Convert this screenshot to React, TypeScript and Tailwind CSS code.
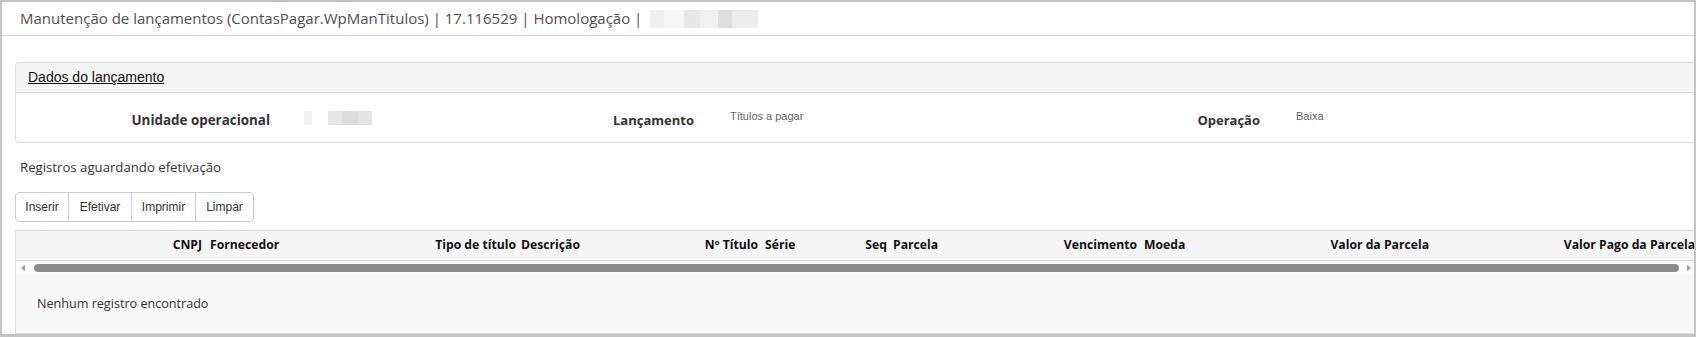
import React from "react";

const hdr: { t: string; w: number; right: boolean; pl?: number }[] = [
  { t: "CNPJ", w: 186, right: true },
  { t: "Fornecedor", w: 199, right: false, pl: 8 },
  { t: "Tipo de título", w: 115, right: true },
  { t: "Descrição", w: 125, right: false, pl: 5 },
  { t: "Nº Título", w: 117, right: true },
  { t: "Série", w: 63, right: false, pl: 7 },
  { t: "Seq", w: 66, right: true },
  { t: "Parcela", w: 114, right: false, pl: 6 },
  { t: "Vencimento", w: 136, right: true },
  { t: "Moeda", w: 114, right: false, pl: 7 },
  { t: "Valor da Parcela", w: 178, right: true },
  { t: "Valor Pago da Parcela", w: 266, right: true },
];

export default function App() {
  const sans = { fontFamily: '"Open Sans", "Liberation Sans", sans-serif' };
  const arial = { fontFamily: '"Liberation Sans", Arial, sans-serif' };
  return (
    <div className="w-[1696px] h-[337px] overflow-hidden bg-white">
      <div className="w-[1696px] h-[337px] box-border border-t-2 border-l-2 border-r-2 border-b-[3px] border-[#c3c3c3] flex flex-col overflow-hidden">
        {/* title bar */}
        <div
          className="h-[34px] shrink-0 border-b border-[#d9d9d9] flex items-center pl-[18px] text-[15px] text-[#505050]"
          style={sans}
        >
          <span>Manutenção de lançamentos (ContasPagar.WpManTitulos) | 17.116529 | Homologação |</span>
          <span className="ml-[8px] flex h-[18px]">
            <span className="w-[14px] bg-[#efefef]" />
            <span className="w-[20px] bg-[#f6f6f6]" />
            <span className="w-[16px] bg-[#e8e8e8]" />
            <span className="w-[18px] bg-[#f0f0f0]" />
            <span className="w-[14px] bg-[#dedede]" />
            <span className="w-[26px] bg-[#ececec]" />
          </span>
        </div>

        <div className="pl-[13px] pt-[26px] flex flex-col">
          {/* panel */}
          <div className="h-[81px] border border-[#dcdcdc] rounded-[4px] flex flex-col shrink-0 -mr-[4px]">
            <div
              className="h-[30px] bg-[#f5f5f5] border-b border-[#dcdcdc] flex items-center pl-[12px] rounded-t-[4px] text-[14px] text-[#111] underline"
              style={arial}
            >
              Dados do lançamento
            </div>
            <div className="flex-1 flex items-start pt-[17px]">
              <div
                className="w-[254px] text-right text-[13.4px] font-bold text-[#333] leading-[20px]"
                style={sans}
              >
                Unidade operacional
              </div>
              <div className="w-[343px] pl-[34px] pt-[1px] flex">
                <div className="flex h-[14px]">
                  <span className="w-[8px] bg-[#f3f3f3]" />
                  <span className="w-[16px] bg-white" />
                  <span className="w-[14px] bg-[#e6e6e6]" />
                  <span className="w-[16px] bg-[#dcdcdc]" />
                  <span className="w-[14px] bg-[#e4e4e4]" />
                </div>
              </div>
              <div
                className="w-[79px] text-right text-[13px] font-bold text-[#333] leading-[20px] whitespace-nowrap"
                style={sans}
              >
                Lançamento
              </div>
              <div
                className="w-[464px] pl-[38px] text-[11px] text-[#666] leading-[14px] -mt-[1px]"
                style={arial}
              >
                Títulos a pagar
              </div>
              <div
                className="w-[104px] text-right text-[13px] font-bold text-[#333] leading-[20px] whitespace-nowrap"
                style={sans}
              >
                Operação
              </div>
              <div
                className="pl-[36px] text-[11px] text-[#666] leading-[14px] -mt-[1px]"
                style={arial}
              >
                Baixa
              </div>
            </div>
          </div>

          {/* section title */}
          <div
            className="mt-[14px] pl-[5px] h-[20px] leading-[20px] text-[13.2px] text-[#333]"
            style={sans}
          >
            Registros aguardando efetivação
          </div>

          {/* button group */}
          <div
            className="mt-[15px] flex h-[30px] w-fit border border-[#cccccc] rounded-[4px] text-[12px] text-[#333]"
            style={arial}
          >
            <div className="w-[53px] flex items-center justify-center border-r border-[#cccccc]">Inserir</div>
            <div className="w-[63px] flex items-center justify-center border-r border-[#cccccc]">Efetivar</div>
            <div className="w-[64px] flex items-center justify-center border-r border-[#cccccc]">Imprimir</div>
            <div className="w-[57px] flex items-center justify-center">Limpar</div>
          </div>

          {/* grid */}
          <div className="mt-[8px] border border-[#dcdcdc] border-r-0 flex flex-col -mr-[4px]">
            <div
              className="h-[30px] bg-[#f5f5f5] border-b border-[#dcdcdc] flex items-center text-[12.2px] font-bold text-[#111] whitespace-nowrap overflow-hidden"
              style={sans}
            >
              {hdr.map((h) => (
                <div
                  key={h.t}
                  className={h.right ? "shrink-0 text-right" : "shrink-0 text-left"}
                  style={{ width: h.w, paddingLeft: h.pl ?? 0 }}
                >
                  {h.t}
                </div>
              ))}
            </div>
            {/* scrollbar */}
            <div className="h-[14px] bg-[#fbfbfb] flex items-center">
              <svg width="18" height="14" viewBox="0 0 18 14" className="shrink-0">
                <path d="M5 7 L9 3.5 L9 10.5 Z" fill="#a3a3a3" />
              </svg>
              <div className="w-[1645px] h-[8px] rounded-full bg-[#8c8c8c] shrink-0" />
              <svg width="18" height="14" viewBox="0 0 18 14" className="shrink-0">
                <path d="M8 3.5 L12 7 L8 10.5 Z" fill="#a3a3a3" />
              </svg>
            </div>
            <div
              className="h-[58px] bg-[#f7f7f7] pl-[21px] pt-[20px] text-[12.6px] text-[#333] leading-[18px]"
              style={sans}
            >
              Nenhum registro encontrado
            </div>
          </div>
        </div>
      </div>
    </div>
  );
}
